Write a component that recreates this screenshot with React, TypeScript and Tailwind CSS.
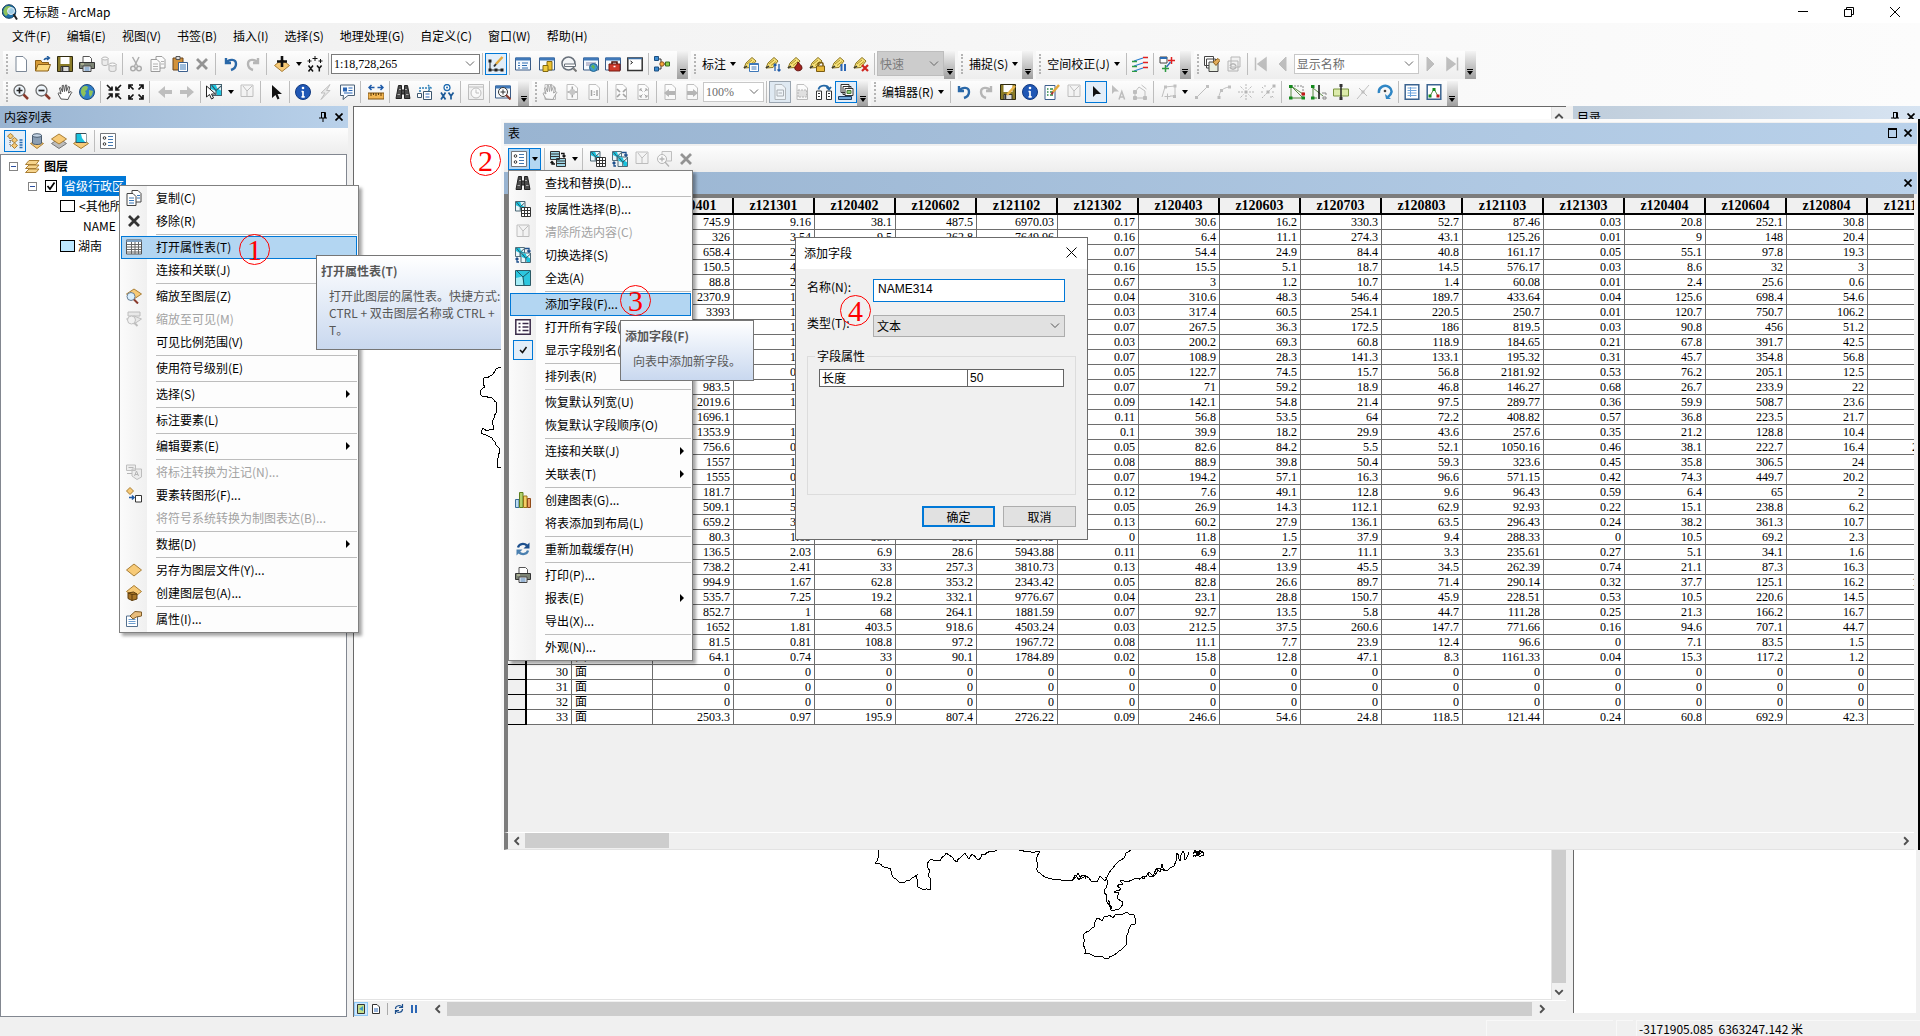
import React, { ReactNode } from "react";

const UI = "font-['Noto_Sans_CJK_SC','Noto_Sans',sans-serif]";
const SONG = "font-['Liberation_Serif','Noto_Sans_CJK_SC',serif]";

/* ---------- icons, each drawn on a 16 x 16 grid ---------- */

const map = (x: number, y: number, s: number) => (
  <g transform={`translate(${x} ${y}) scale(${s})`}>
    <path d="M0 0h10v10H0z" fill="#e8f6fa" stroke="#44606e" />
    <path d="M.5.5H5l1 3 3.500 2v4H6L5 6 .5 4z" fill="#19c3de" />
    <path d="M1 .5l4 5 4.500-4M5 5.500V9.500" fill="none" stroke="#36505c" />
  </g>
);
const tag = (
  <>
    <path d="M1 12l2-5 6-5.500 4 3.500-5 6.500z" fill="#f7e27a" stroke="#8a7420" />
    <path d="M4 8l5-4M6 9.500l5-4" stroke="#b09328" />
    <path d="M1 12l3-2" stroke="#333" strokeWidth="1.500" />
  </>
);
const layer = (y: number, fill = "#f7ca77", stroke = "#a97e35") => (
  <path d={`M.5 ${y}L8 ${y - 6}l7.500 6L8 ${y + 6}z`} fill={fill} stroke={stroke} />
);
const flatLayer = (y: number, fill = "#f7ca77", stroke = "#a97e35") => (
  <path d={`M.5 ${y}L8 ${y - 5}l7.500 5L8 ${y + 5}z`} fill={fill} stroke={stroke} />
);
const win = (
  <>
    <path d="M.5 2h15v12H.5z" fill="#f5f9fd" stroke="#3b5b85" />
    <path d="M.5 1.500h15v3H.5z" fill="#3f78b8" />
  </>
);
const magnifier = (sign: ReactNode) => (
  <>
    <circle cx="6.500" cy="6.500" r="5.500" fill="#eef5fb" stroke="#6d6d6d" strokeWidth="1.300" />
    <path d="M10.500 10.500l4.500 4.500" stroke="#8a3a2c" strokeWidth="2.500" />
    {sign}
  </>
);
const hand = (
  <path
    d="M4 15L1 9.500l1-.8L4 10 2.500 4l1.200-.3L5.500 8 5.200 1.500l1.300-.2L7.500 7.500 8.500 1l1.300.2-.3 6L11.500 2.500l1.200.5-1.200 6 2.500-1.500.8.8L12 13l-1 2.500z"
    fill="#fff"
    stroke="#555"
  />
);
const page = <path d="M3 .5h7l3.500 3.500v11.500H3z" fill="#fff" stroke="#7b8796" />;
const undoPath = "M3 2v5h5M3.500 6.500C6 3 13 2.500 13 8c0 3-2 5-5 6";
const redoPath = "M13 2v5H8M12.500 6.500C10 3 3 2.500 3 8c0 3 2 5 5 6";
const inArrows = "M4 5l3 3M13 5l-3 3M4 13l3-3M13 13l-3-3";
const binoculars = (
  <>
    <path d="M1 14.500l2.500-13H6.500v13zM9.500 14.500v-13h3l2.500 13zM6.500 6h3v4h-3z" fill="#4b4b4b" stroke="#222" />
    <path d="M2.500 10.500H5M11 10.500h2.500M4 5.500h2M10 5.500h2" stroke="#aaa" />
  </>
);
const listIcon = (
  <>
    <path d="M.5.5h15v15H.5z" fill="#fff" stroke="#74777c" />
    <path d="M8 3.500h5M8 6.500h5M8 9.500h5M8 12.500h5" stroke="#4478b0" />
    <circle cx="4.500" cy="5" r="1.300" fill="#fff" stroke="#333" />
    <circle cx="4.500" cy="11" r="1.300" fill="#fff" stroke="#333" />
  </>
);
const printer = (
  <>
    <path d="M4 .5h6.500l2 2V7H4z" fill="#fff" stroke="#555" />
    <path d="M.5 6.500h15v6H.5z" fill="#7c8374" stroke="#333" />
    <path d="M4 10h8v5.500H4z" fill="#eef3f8" stroke="#444" />
    <path d="M5.500 12h5M5.500 14h5" stroke="#4478b0" />
    <path d="M2 8h3" stroke="#d6d9b0" />
  </>
);
const grid = (
  <>
    <path d="M.5 1h15v14H.5z" fill="#fff" stroke="#555" />
    <path d="M.5 1h15v2H.5z" fill="#7c9ec0" />
    <path d="M1 5.500h14M1 8h14M1 10.500h14M1 13h14M5.500 3v12M9 3v12M12.500 3v12" stroke="#666" />
  </>
);
const floppy = (
  <>
    <path d="M.5.5h15v15H.5z" fill="#8a7b28" stroke="#2f2a10" />
    <path d="M3.500 1h9v7h-9z" fill="#fff" />
    <path d="M4 10.500h8v5H4z" fill="#ddd" stroke="#333" />
    <path d="M5.500 11v4" stroke="#333" strokeWidth="1.500" />
  </>
);
const docs = (
  <>
    <path d="M6 .5h6l3 3V12H6z" fill="#fff" stroke="#444" />
    <path d="M1 3.500h6l3 3v9H1z" fill="#fff" stroke="#444" />
    <path d="M3 8h5M3 10.500h5M3 13h5M11 5.500h3M11 8h3" stroke="#3a78b8" />
  </>
);
const smallGrid = (
  <>
    <path d="M6.500 6.500h9v9h-9z" fill="#fff" stroke="#333" />
    <path d="M6.500 9.500h9M6.500 12.500h9M9.500 6.500v9M12.500 6.500v9" stroke="#333" />
  </>
);

const icons: Record<string, ReactNode> = {
  new: page,
  open: (
    <>
      <path d="M.5 4.500H6l1 2h6.500v8H.5z" fill="#d79b36" stroke="#8a5f18" />
      <path d="M3 8.500h12.500l-2.500 6.500H.5z" fill="#fbd97f" stroke="#8a5f18" />
      <path d="M9 4c1-2 3-2 5-2M12 0l2.500 2L12 4" fill="none" stroke="#1e5a9c" strokeWidth="1.300" />
    </>
  ),
  save: floppy,
  print: printer,
  db: (
    <>
      <path d="M1 2v6c0 2 6 2 6 0V2M8 8v6c0 2 7 2 7 0V8" fill="#e3e3e3" stroke="#777" />
      <ellipse cx="4" cy="2.500" rx="3" ry="1.500" fill="#fff" stroke="#777" />
      <ellipse cx="11.500" cy="8.500" rx="3.500" ry="1.500" fill="#fff" stroke="#777" />
    </>
  ),
  cut: (
    <>
      <path d="M4.500 1l5 9M11 1L6.500 10" stroke="#666" strokeWidth="1.500" />
      <circle cx="5" cy="12.500" r="2.300" fill="none" stroke="#666" strokeWidth="1.500" />
      <circle cx="11" cy="12.500" r="2.300" fill="none" stroke="#666" strokeWidth="1.500" />
    </>
  ),
  copy: docs,
  paste: (
    <>
      <path d="M1 2h10v12H1z" fill="#d2923b" stroke="#6a451a" />
      <path d="M4 .5h4v3H4z" fill="#ddd" stroke="#555" />
      <path d="M6.500 6.500h9v9h-9z" fill="#fff" stroke="#3c5f8d" />
      <path d="M8 9h6M8 11h6M8 13h6" stroke="#3a78b8" />
    </>
  ),
  x: <path d="M3 3l10 10M13 3L3 13" stroke="#333" strokeWidth="2.800" />,
  undo: <path d={undoPath} fill="none" stroke="#2a68a8" strokeWidth="2.400" />,
  redo: <path d={redoPath} fill="none" stroke="#777" strokeWidth="2.400" />,
  add: (
    <>
      {layer(9.5)}
      <path d="M8 0v11M3 5.500h10" stroke="#111" strokeWidth="2.600" />
    </>
  ),
  xy: (
    <>
      <path d="M8 0v5M5.500 2.500h5M2.500 3v4M.5 5h4M13.500 3v4M11.500 5h4" stroke="#111" />
      <path d="M1.500 9.500l4.500 6M6 9.500l-4.500 6M10 9.500l2.300 2.800 2.300-2.800M12.300 12v3.500" fill="none" stroke="#111" strokeWidth="1.500" />
    </>
  ),
  editor: (
    <>
      <path d="M2 5v9h12" fill="none" stroke="#222" />
      <path d="M.5 3.500h3v3h-3zM.5 12.500h3v3h-3zM6.500 12.500h3v3h-3zM12.500 12.500h3v3h-3z" fill="#222" />
      <path d="M8 8l6.500-7" stroke="#e5a93b" strokeWidth="2.500" />
      <path d="M6 10.500L8 8" stroke="#333" strokeWidth="2" />
    </>
  ),
  toc: (
    <>
      {win}
      <path d="M3 7h2M3 9.500h2M3 12h2M7 7h6M7 9.500h5M7 12h6" stroke="#2f6db0" />
    </>
  ),
  catalog: (
    <>
      {win}
      <path d="M8 5.500h5V14H8z" fill="#edc22e" stroke="#846a10" />
      <path d="M4 9.500h5v6H4z" fill="#f0cb3c" stroke="#846a10" />
    </>
  ),
  search: (
    <>
      <circle cx="7.500" cy="7.500" r="6.500" fill="#f4f6f8" stroke="#68707a" strokeWidth="1.500" />
      <path d="M3.500 8h11v2.500h-11z" fill="#fff" stroke="#68707a" />
      <path d="M12.500 12.500l3 3" stroke="#777" strokeWidth="2" />
    </>
  ),
  globewin: (
    <>
      {win}
      <path d="M3 7h10M3 9h4" stroke="#88a" />
      <circle cx="10.500" cy="11.500" r="4" fill="#3f9ad0" stroke="#24628c" />
      <path d="M8 10.500l2-2 2 2-1 3z" fill="#62b353" />
    </>
  ),
  toolbox: (
    <>
      {win}
      <path d="M4 8h11v7H4z" fill="#cf3a2c" stroke="#741b12" />
      <path d="M7 8V6h5v2" fill="none" stroke="#4d1009" strokeWidth="1.500" />
      <path d="M8.500 10.500h2" stroke="#fff" strokeWidth="1.500" />
    </>
  ),
  python: (
    <>
      <path d="M.8 2h14.400v12.500H.8z" fill="#fff" stroke="#333" strokeWidth="1.500" />
      <path d="M1 2.500h14" stroke="#3b6ea5" strokeWidth="1.500" />
      <path d="M3.500 5l2 1.500-2 1.500" fill="none" stroke="#111" />
    </>
  ),
  model: (
    <>
      <path d="M3 3h4v10H3M7 8h5" fill="none" stroke="#333" />
      <path d="M.5.5h4v4h-4zM.5 11h4v4h-4z" fill="#3b8bd1" stroke="#1d4f80" />
      <circle cx="8" cy="8" r="2.200" fill="#f7a73b" stroke="#8a5420" />
      <path d="M11.500 6h4v4h-4z" fill="#8fcf4b" stroke="#3a6c22" />
    </>
  ),
  tagwin: (
    <>
      {tag}
      <path d="M6.500 7.500h9v8h-9z" fill="#fff" stroke="#3f78b8" />
      <path d="M6.500 8.500h9M8.500 11h5M8.500 13h5" stroke="#3f78b8" />
    </>
  ),
  tagsort: (
    <>
      {tag}
      <path d="M10 8v7M8.500 9.500L10 8l1.500 1.500M14 8v7M12.500 13.500L14 15l1.500-1.500" fill="none" stroke="#1e5aa8" strokeWidth="1.300" />
    </>
  ),
  tagred: (
    <>
      {tag}
      <path d="M11 6c1 2 4 3 4 6s-6 4-7 1 2-3 3-7z" fill="#a3231d" stroke="#64120e" />
    </>
  ),
  taglock: (
    <>
      {tag}
      <path d="M9 10V8c0-2 5-2 5 0v2" fill="none" stroke="#7a5b12" strokeWidth="1.500" />
      <path d="M7.500 10h8v5.500h-8z" fill="#e8b93a" stroke="#7a5b12" />
    </>
  ),
  tagpause: (
    <>
      {tag}
      <path d="M10.500 8v7M14 8v7" stroke="#2b66b5" strokeWidth="2" />
    </>
  ),
  tagx: (
    <>
      {tag}
      <path d="M9 9l6 6M15 9l-6 6" stroke="#cf2620" strokeWidth="2.200" />
    </>
  ),
  adjust: (
    <>
      <path d="M2 5l9-3M2 10l9-3M2 15l9-3" stroke="#2b7fd0" strokeWidth="1.300" />
      <path d="M11 1.500h5M11 6.500h5M11 11.500h5" stroke="#e02020" strokeWidth="1.500" />
      <path d="M0 5.500h5M0 10.500h5M0 15.500h5" stroke="#2d9a41" strokeWidth="1.500" />
    </>
  ),
  link: (
    <>
      <path d="M1 1h7v6H1z" fill="#fff" stroke="#444" />
      <path d="M1 2h7" stroke="#2b6cb5" strokeWidth="2" />
      <path d="M12.500 1v7M9 4.500h7" stroke="#e02020" strokeWidth="1.500" />
      <path d="M6.500 9v7M3 12.500h7" stroke="#2d9a41" strokeWidth="1.500" />
      <path d="M7.500 11l4-5" stroke="#2b6cb5" strokeWidth="1.300" />
    </>
  ),
  pages: (
    <>
      <path d="M.5.5h9v9h-9zM2.500 3h9v9h-9z" fill="#fff" stroke="#444" />
      <path d="M5 6h9v9.500H5z" fill="#e8eee0" stroke="#444" />
      <path d="M9 6l5-3.500 2 2-4 5z" fill="#e2ad5a" stroke="#8a5f18" />
    </>
  ),
  refreshpages: (
    <>
      <path d="M5 1h9v10H5zM2 5h10v10H2z" fill="#eee" stroke="#777" />
      <path d="M4 10c1-3 5-3 6 0M10 11c-1 3-5 3-6 0" fill="none" stroke="#777" strokeWidth="1.500" />
    </>
  ),
  first: <path d="M2.500 1.500v13M13 2L5 8l8 6z" fill="#888" stroke="#888" strokeWidth="1.500" />,
  prev: <path d="M11 1L4 8l7 7z" fill="#888" stroke="#888" />,
  next: <path d="M5 1l7 7-7 7z" fill="#888" stroke="#888" />,
  last: <path d="M13.500 1.500v13M3 2l8 6-8 6z" fill="#888" stroke="#888" strokeWidth="1.500" />,
  zoomin: magnifier(<path d="M6.500 3.500v6M3.500 6.500h6" stroke="#222" strokeWidth="1.700" />),
  zoomout: magnifier(<path d="M3.500 6.500h6" stroke="#222" strokeWidth="1.700" />),
  pan: hand,
  globe: (
    <>
      <circle cx="8" cy="8" r="7.500" fill="#2f7dc8" stroke="#1d4b7c" />
      <path d="M3 4c2-3 5-2 6-1L8 6 6 7l1 2-2 4C2 11 1 7 3 4zM10 6l4 1-1 4-2 2-1-3z" fill="#8fc25a" />
    </>
  ),
  fixin: (
    <path d="M1 1l4 4M15 1l-4 4M1 15l4-4M15 15l-4-4M6 2.500V6H2.500M10 2.500V6h3.500M6 13.500V10H2.500M10 13.500V10h3.500" fill="none" stroke="#111" strokeWidth="1.700" />
  ),
  fixout: (
    <path d="M1 1l4.500 4.500M15 1l-4.500 4.500M1 15l4.500-4.500M15 15l-4.500-4.500M1 5V1h4M15 5V1h-4M1 11v4h4M15 11v4h-4" fill="none" stroke="#111" strokeWidth="1.700" />
  ),
  back: <path d="M8 2v4h7v4H8v4L1 8z" fill="#888" />,
  fwd: <path d="M8 2v4H1v4h7v4l7-6z" fill="#888" />,
  select: (
    <>
      {map(4.5, 0.5, 1.1)}
      <path d="M.5 2v11l3-2.500 2 4.500 2-1-2-4h4z" fill="#fff" stroke="#222" />
    </>
  ),
  clear: (
    <>
      <path d="M2 1h12v11.500H2z" fill="#f2f2f2" stroke="#888" />
      <path d="M4 2l4 5 5-5M8 7v5" fill="none" stroke="#888" />
    </>
  ),
  pointer: <path d="M4 1v13l3.500-3 2 4.500 2-1-2-4.500H14z" fill="#111" />,
  info: (
    <>
      <circle cx="8" cy="8" r="7.500" fill="#1f57b5" stroke="#123a80" />
      <path d="M8 7v6M6.500 7.500H8M6.500 12.800h3.200" stroke="#fff" strokeWidth="1.700" />
      <circle cx="8" cy="4" r="1.300" fill="#fff" />
    </>
  ),
  bolt: <path d="M13 .5L4 9h4l-4 6.500 9-9H9.500z" fill="#ddd" stroke="#888" />,
  html: (
    <>
      <path d="M1.500 1h14v10.500H9l-5 4 .5-4h-3z" fill="#f6fafe" stroke="#4b6076" />
      <path d="M4 3.500h4v4H4z" fill="#2b66b5" />
      <path d="M9.500 4h4M9.500 6.500h4M5 9h8.500" stroke="#2b66b5" />
    </>
  ),
  measure: (
    <>
      <path d="M1 3.500h5.500M9.500 3.500H15M3.500 1l-2.500 2.500L3.500 6M12.500 1L15 3.500 12.500 6" fill="none" stroke="#1e5aa8" strokeWidth="1.500" />
      <path d="M0 9h16v6H0z" fill="#f3b652" stroke="#7e5212" />
      <path d="M3 9v3M5.500 9v2M8 9v3M10.500 9v2M13 9v3" stroke="#5d3b09" />
    </>
  ),
  find: binoculars,
  route: (
    <>
      <path d="M3 8V4h10M11 1l3 3-3 3" fill="none" stroke="#2b7fb8" strokeWidth="1.500" strokeDasharray="2 1" />
      <path d="M.5 9.500h4v4h-4zM6.500 7.500h8v8h-8z" fill="#fff" stroke="#3c566e" />
      <path d="M8.500 10h4M8.500 13h4" stroke="#2b66b5" />
    </>
  ),
  goxy: (
    <>
      <circle cx="8" cy="3.500" r="3" fill="#fff" stroke="#1e6ab0" strokeWidth="1.300" />
      <circle cx="8" cy="3.500" r="1" fill="#1e6ab0" />
      <path d="M2 8.500l4.500 7M6.500 8.500L2 15.500M9.500 8.500l2.500 3.500 2.500-3.500M12 12v3.500" fill="none" stroke="#1c5a98" strokeWidth="1.700" />
    </>
  ),
  time: (
    <>
      <path d="M.5.5h15v15H.5z" fill="#eee" stroke="#888" />
      <path d="M1 3h14" stroke="#888" />
      <circle cx="8" cy="9" r="5" fill="#fff" stroke="#888" />
      <path d="M8 5.500V9h3" fill="none" stroke="#888" />
    </>
  ),
  viewer: (
    <>
      {win}
      <circle cx="8" cy="8" r="4.500" fill="#fff" stroke="#333" />
      <path d="M8 5.500v5M5.500 8h5" stroke="#333" />
      <path d="M11 11l4.500 4.500" stroke="#8a3a2c" strokeWidth="2" />
    </>
  ),
  ppan: (
    <>
      {page}
      {hand}
    </>
  ),
  pfull: (
    <>
      {page}
      <path d="M8.300 2.500v11M3.500 8h9.500" stroke="#555" strokeWidth="1.500" />
      <circle cx="8.300" cy="8" r="3" fill="#999" />
    </>
  ),
  p11: (
    <>
      {page}
      <path d="M5.500 6v6M11 6v6M8.300 7.500v1M8.300 10v1" stroke="#555" strokeWidth="1.500" />
    </>
  ),
  pin: (
    <>
      {page}
      <path d={inArrows} stroke="#555" strokeWidth="1.700" />
    </>
  ),
  pout: (
    <>
      {page}
      <path d="M5 5l2.500 2.500M12 5L9.500 7.500M5 13l2.500-2.500M12 13l-2.500-2.500M5 7V5h2M12 7V5h-2M5 11v2h2M12 11v2h-2" fill="none" stroke="#555" />
    </>
  ),
  pback: (
    <>
      {page}
      <path d="M7 5v2h6v4H7v2L2 9z" fill="#777" />
    </>
  ),
  pfwd: (
    <>
      {page}
      <path d="M9 5v2H3v4h6v2l5-4z" fill="#777" />
    </>
  ),
  draft: (
    <>
      {page}
      <path d="M5 6h6.500v6H5zM6.500 9h3.500" fill="none" stroke="#777" />
    </>
  ),
  focus: (
    <>
      {page}
      <path d="M4 6h8.500v7H4z" fill="#ccc" stroke="#777" strokeDasharray="2 1" />
    </>
  ),
  layout: (
    <>
      <path d="M.5 7h5v8.500h-5zM10.500 7h5v8.500h-5z" fill="#fff" stroke="#333" />
      <path d="M2 9.500h2M2 12.500h2M12 9.500h2M12 12.500h2" stroke="#333" />
      <path d="M2.500 5.500c1-5 9-5 10.500-1M10.500 3l2.500 2.500L15 3" fill="none" stroke="#2166a5" strokeWidth="1.800" />
    </>
  ),
  driven: (
    <>
      <path d="M3 .5h8v8H3zM5 2.500h8v8H5z" fill="#fff" stroke="#333" />
      <path d="M7 4.500h8v7H7z" fill="#fff" stroke="#333" />
      <path d="M9 6.500h4v3H9z" fill="#8fcf7b" stroke="#4b7a3a" />
      <path d="M.5 12.500h13v3H.5z" fill="#6fa8dc" stroke="#1d3f66" />
    </>
  ),
  saveedit: (
    <>
      {floppy}
      <path d="M7 11l8-9" stroke="#eab549" strokeWidth="2.500" />
    </>
  ),
  attrs: (
    <>
      <path d="M1 1.500h10v14H1z" fill="#fff" stroke="#3c5f8d" />
      <path d="M3 5h1.500M3 8h1.500M3 11h1.500M6 5h3M6 8h3M6 11h3" stroke="#2e8b45" strokeWidth="1.500" />
      <path d="M9 8l6-7" stroke="#e5a93b" strokeWidth="2.500" />
      <path d="M7.500 10.500L9 8" stroke="#a33" strokeWidth="2" />
    </>
  ),
  edit: <path d="M5 2v11l3-3h5z" fill="#111" />,
  edita: (
    <>
      <path d="M2 1v9l2.500-2.500H9z" fill="#888" />
      <path d="M9 15.500l2.800-8 2.800 8M10 13h3.500" fill="none" stroke="#888" strokeWidth="1.500" />
    </>
  ),
  reshape: (
    <>
      <path d="M3 14V8l4-5 6 4v7z" fill="none" stroke="#888" />
      <path d="M1.500 6.500h3v3h-3zM1.500 12.500h3v3h-3zM11.500 12.500h3v3h-3zM9.500 1l5 4" fill="#888" stroke="#888" />
    </>
  ),
  vertex: (
    <>
      <path d="M1 13l3-10 10-1v10H9M6.500 9.500v6M3.500 12.500h6" fill="none" stroke="#888" />
      <path d="M3 1.500h3v3H3zM12.500.5h3v3h-3zM12 11h3v3h-3z" fill="#888" />
    </>
  ),
  line: (
    <>
      <path d="M3 13L13 3" stroke="#888" />
      <path d="M1 12h3v3H1zM12 1h3v3h-3z" fill="#888" />
    </>
  ),
  arc: (
    <>
      <path d="M3 14c0-7 4-10 10-11" fill="none" stroke="#888" />
      <path d="M1.500 12h3v3h-3zM4 5h3v3H4zM12 1.500h3v3h-3z" fill="#888" />
    </>
  ),
  mid: (
    <>
      <path d="M8 0v5M8 11v5M0 8h5M11 8h5M2.500 2.500l3 3M13.500 2.500l-3 3M2.500 13.500l3-3M13.500 13.500l-3-3" stroke="#777" strokeDasharray="2 1" />
      <path d="M6.500 6.500h3v3h-3z" fill="#777" />
    </>
  ),
  midline: (
    <>
      <path d="M2 14L14 2M5 1v3M11 12v3M1 8h3M12 8h3M2 3l2 2M12 12l2 2" stroke="#777" strokeDasharray="2 1" />
      <path d="M6.500 6.500h3v3h-3zM12.500.5h3v3h-3z" fill="#777" />
    </>
  ),
  split1: (
    <>
      <path d="M2 2v12h12zM2 2l12 8" fill="none" stroke="#5b8c45" />
      <path d="M2 2h12v12" fill="none" stroke="#888" strokeDasharray="2 1" />
      <path d="M0 1h3.500v3H0zM0 12.500h3.500v3H0zM12.500 12.500H16v3h-3.500z" fill="#158a1e" />
      <path d="M12.500 8.500H16v3h-3.500z" fill="#c01818" />
    </>
  ),
  split2: (
    <>
      <path d="M2 2v12h4M2 4l10 8" fill="none" stroke="#5b8c45" />
      <path d="M8 1v14" stroke="#111" strokeWidth="1.500" />
      <path d="M0 1h3.500v3H0zM0 12.500h3.500v3H0z" fill="#158a1e" />
      <path d="M11 9h4v2M12 13h3v2h-3z" fill="none" stroke="#888" />
    </>
  ),
  cutpoly: (
    <>
      <path d="M.5 5h15v7H.5z" fill="#dcebab" stroke="#7a9440" />
      <path d="M8 1v14" stroke="#222" strokeWidth="1.500" />
      <path d="M6.500 0h3v3h-3zM6.500 13h3v3h-3z" fill="#333" />
    </>
  ),
  splitline: (
    <>
      <path d="M2 15L14 1M4 4l8 8" stroke="#888" />
      <path d="M6.500 6.500h3v3h-3z" fill="#888" />
    </>
  ),
  rotate: (
    <>
      <path d="M2 9C1 3 8 0 12 3s3 7-1 10" fill="none" stroke="#2f86c5" strokeWidth="2.500" />
      <path d="M8 10l1 5h5z" fill="#2f86c5" />
      <circle cx="8" cy="7" r="1.300" fill="#444" />
    </>
  ),
  rows: (
    <>
      <path d="M1.200.8h13.600v14.400H1.200z" fill="#fff" stroke="#3a6390" strokeWidth="1.500" />
      <path d="M3.500 4h9M3.500 6.500h9M3.500 9h9M3.500 11.500h9M6.500 3v10" stroke="#6ea4dc" />
    </>
  ),
  sketch: (
    <>
      <path d="M1.200.8h13.600v14.400H1.200z" fill="#fff" stroke="#3a6390" strokeWidth="1.500" />
      <path d="M4 12l4-7 4 7" fill="none" stroke="#5b8c45" />
      <path d="M2.500 10.500h3v3h-3zM6.500 4h3v3h-3z" fill="#158a1e" />
      <path d="M10.500 10.500h3v3h-3z" fill="#c01818" />
    </>
  ),
  order: (
    <>
      <path d="M3 5v8h5M3 8h5" fill="none" stroke="#555" strokeDasharray="1 1" />
      <path d="M.5 3l3-2.500L6.500 3l-3 3zM4.500 7l3-2.500 3 2.500-3 3zM4.500 12.500l3-2.500 3 2.500-3 3z" fill="#f7ca77" stroke="#a97e35" />
      <path d="M12.500 7h3M12.500 9.500h3M12.500 12h3M12.500 14.500h3" stroke="#2c6cb0" strokeWidth="1.500" />
    </>
  ),
  source: (
    <>
      <path d="M1.500 10.500l6.500-3 6.500 3-6.500 5z" fill="#f7ca77" stroke="#a97e35" />
      <path d="M3.500 2v8c0 2 9 2 9 0V2" fill="#8b9fb5" stroke="#4a5c70" />
      <ellipse cx="8" cy="2.500" rx="4.500" ry="1.800" fill="#c6d5e5" stroke="#4a5c70" />
    </>
  ),
  visible: (
    <>
      {flatLayer(10.5, "#bbb", "#777")}
      {flatLayer(6)}
    </>
  ),
  selection: (
    <>
      {flatLayer(10.5)}
      <path d="M3 .5h10v9H3z" fill="#19c3de" stroke="#36505c" />
      <path d="M8 1l1 4 3 4h1V1z" fill="#fff" />
    </>
  ),
  list: listIcon,
  layers: (
    <path d="M1.500 14.500H12l3-3.500H5zM1.500 10.500H12L15 7H5zM1.500 6.500H12l3-4H5z" fill="#f7d48c" stroke="#a97e35" />
  ),
  table: grid,
  zoomlayer: (
    <>
      {flatLayer(6)}
      <circle cx="5" cy="8.500" r="4" fill="#d9efff" stroke="#6a7f94" />
      <path d="M8 11.500l4 4" stroke="#8a3a2c" strokeWidth="2" />
    </>
  ),
  zoomvis: (
    <>
      <path d="M2 1h12v4H2zM.5 8L8 5l7.500 3L8 13z" fill="#ddd" stroke="#888" />
      <circle cx="5.500" cy="9" r="4" fill="#eee" stroke="#888" />
      <path d="M8.500 12l3 3" stroke="#888" strokeWidth="2" />
    </>
  ),
  anno: (
    <>
      <path d="M.5 1h9v5.500h-9zM6 5h9.500v8L11 15.500 6 12z" fill="#e6e6e6" stroke="#888" />
      <path d="M2.500 3.500h5M1 9.500h5M8.500 12l2-5 2 5M9 10.500h3" fill="none" stroke="#777" />
    </>
  ),
  tographic: (
    <>
      <path d="M.5 4l3.500-3.500L7.500 4 4 7.500z" fill="#f7ca77" stroke="#a97e35" />
      <path d="M3 10.500h5M6 8.500l2 2-2 2" fill="none" stroke="#1e5aa8" strokeWidth="1.500" />
      <path d="M9.500 8.500h6v6.500h-6z" fill="#fff" stroke="#333" />
    </>
  ),
  lyr: layer(8),
  package: (
    <>
      {layer(6.5)}
      <path d="M2 8l5.500-1 3.500 2v5l-5 1.500-4-2z" fill="#a87526" stroke="#5e3d0c" />
      <path d="M6 9.500V15.500M2 8l4 1.500L11 9" fill="none" stroke="#5e3d0c" />
    </>
  ),
  props: (
    <>
      <path d="M.5 5h11v10.500H.5z" fill="#fff" stroke="#54708e" />
      <path d="M2.500 8.500h7M2.500 10.500h7M2.500 12.500h7" stroke="#6d9ed0" />
      <path d="M4 5l5-4.500 6.500.5V5l-5 1-3.500 2z" fill="#e8bd7c" stroke="#7f5c28" />
    </>
  ),
  related: (
    <>
      <path d="M.5.5h9v8h-9zM6.500 7.500h9v8h-9z" fill="#9fd8e8" stroke="#333" />
      <path d="M.5 3h9M.5 5.500h9M6.500 10h9M6.500 12.500h9" stroke="#333" />
      <path d="M11 2.500h3v3M12.500 4.500L14 6l1.500-1.500M5 13H2v-2.500M.5 12L2 10.500 3.500 12" fill="none" stroke="#111" strokeWidth="1.300" />
    </>
  ),
  selattr: (
    <>
      {map(0.5, 0.5, 0.95)}
      {smallGrid}
    </>
  ),
  switch: (
    <>
      {map(0.5, 0.5, 0.9)}
      {map(6, 6, 0.95)}
      <path d="M10 1.500h4v3.500M12.300 3.500L14 5.300l1.500-1.800M4 15H2v-4M.5 12.500L2 11l1.500 1.500" fill="none" stroke="#1d4f8c" strokeWidth="1.300" />
    </>
  ),
  zoomsel: (
    <>
      <path d="M6 .5h9.500v9.500H6z" fill="#eee" stroke="#888" />
      <circle cx="6" cy="8" r="4.500" fill="#fff" stroke="#777" />
      <path d="M6 5.500v5M3.500 8h5M9 11l4 4.500" stroke="#777" strokeWidth="1.300" />
    </>
  ),
  selall: (
    <>
      <path d="M.5.5h15v15H.5z" fill="#2cc6de" stroke="#2c5a66" />
      <path d="M1 8l6.500-1.500L8.500 15H1z" fill="#a5ecf5" />
      <path d="M2 1l6 6 6.500-5.500M8 7l1 8" fill="none" stroke="#1b5966" />
    </>
  ),
  fields: (
    <>
      <path d="M.8.8h14.400v14.400H.8z" fill="#fff" stroke="#3b2b49" strokeWidth="1.500" />
      <path d="M3.500 4.500h2M3.500 8h2M3.500 11.500h2M7.500 4.500h6M7.500 8h6M7.500 11.500h6" stroke="#3b2b49" strokeWidth="1.500" />
    </>
  ),
  check: <path d="M5 8l2.500 2.500L11.500 5" fill="none" stroke="#111" strokeWidth="1.500" />,
  chart: (
    <>
      <path d="M.5 7.500h3.500v8H.5z" fill="#bcdcf2" stroke="#3b6e96" />
      <path d="M4.500.5H8v15H4.500z" fill="#b4d16c" stroke="#5c7e1d" />
      <path d="M8.500 4H12v11.500H8.500z" fill="#f5cf66" stroke="#96741a" />
      <path d="M12.500 6.500h3v9h-3z" fill="#e89c62" stroke="#914a17" />
    </>
  ),
  reload: (
    <>
      <path d="M3 6.500c1-4 6-4.500 9-2" fill="none" stroke="#1c4f8d" strokeWidth="2.300" />
      <path d="M14.500 1.500v6h-6z" fill="#1c4f8d" />
      <path d="M13 9.500c-1 4-6 4.500-9 2" fill="none" stroke="#4b80b0" strokeWidth="2.300" />
      <path d="M1.500 14.500v-6h6z" fill="#4b80b0" />
    </>
  ),
};

function Icon({ name, dim = false }: { name: string; dim?: boolean }) {
  return (
    <svg viewBox="0 0 16 16" className={dim ? "size-4 shrink-0 opacity-50 grayscale" : "size-4 shrink-0"} aria-hidden="true">
      {icons[name]}
    </svg>
  );
}

function Caret() {
  return <span className="size-0 border-x-[3px] border-t-[4px] border-x-transparent border-t-black" />;
}

/* "|" separator, "_" small gap, "v" drop arrow, "~" disabled, "#" pressed, "=" pressed and disabled */
function Tools({ items }: { items: string }) {
  return (
    <>
      {items.split(" ").map((t, i) => {
        if (t === "|") return <span key={i} className="mx-0.5 h-[22px] w-px shrink-0 bg-[#bdbdbd]" />;
        if (t === "_") return <span key={i} className="w-0.5 shrink-0" />;
        if (t === "v")
          return (
            <button key={i} aria-label="more" className="flex h-[22px] w-[11px] shrink-0 items-center justify-center">
              <Caret />
            </button>
          );
        const mark = t[0];
        const name = t.replace(/^[~#=]/, "");
        const box =
          mark === "#"
            ? "border border-[#0078d7] bg-[#e3eef9]"
            : mark === "="
              ? "border border-[#9aa5b0] bg-[#dfe9f2]"
              : "";
        return (
          <button key={i} aria-label={name} className={`flex size-[22px] shrink-0 items-center justify-center ${box}`}>
            <Icon name={name} dim={mark === "~" || mark === "="} />
          </button>
        );
      })}
    </>
  );
}

function Bar({ children }: { children: ReactNode }) {
  return (
    <div className="flex h-full shrink-0 items-stretch bg-gradient-to-b from-[#fdfdfd] to-[#ededed] pl-[3px]">
      <div className="flex items-center pb-[3px]">
        <span className="mr-0.5 h-5 w-0 border-l-2 border-dotted border-[#b4b4b4]" />
        {children}
      </div>
      <button
        aria-label="toolbar options"
        className="flex w-[11px] flex-col items-center justify-end gap-px bg-gradient-to-b from-[#f4f4f4] to-[#9f9f9f] pb-1"
      >
        <span className="h-px w-1.5 bg-black" />
        <Caret />
      </button>
    </div>
  );
}

function TextDrop({ label }: { label: string }) {
  return (
    <button className="flex h-[22px] items-center gap-1 px-1">
      {label}
      <Caret />
    </button>
  );
}

function Combo({ value, label, frame, text = "" }: { value: string; label: string; frame: string; text?: string }) {
  return (
    <span className={`relative flex items-center border ${frame}`}>
      <select aria-label={label} className={`h-full w-full appearance-none bg-transparent pl-0.5 text-xs outline-none ${text}`}>
        <option>{value}</option>
      </select>
      <svg viewBox="0 0 10 6" className="pointer-events-none absolute right-1 h-1.5 w-2.5" aria-hidden="true">
        <path d="M1 .5l4 4 4-4" fill="none" stroke="#666" />
      </svg>
    </span>
  );
}

function Cross() {
  return (
    <svg viewBox="0 0 8 8" className="size-2" aria-hidden="true">
      <path d="M.5.5l7 7M7.500.5l-7 7" stroke="#000" strokeWidth="1.700" />
    </svg>
  );
}
function PushPin() {
  return (
    <svg viewBox="0 0 8 10" className="h-2.5 w-2" aria-hidden="true">
      <path d="M2 .5h4.500V6M2.500 0v6M0 6h8M4 6v4M5.500.5V6" fill="none" stroke="#000" />
    </svg>
  );
}

/* ---------- menus ---------- */

type Item = { t: string; icon?: string; off?: boolean; sub?: boolean; hot?: boolean; on?: boolean } | null;

const layerMenu: Item[] = [
  { t: "复制(C)", icon: "copy" },
  { t: "移除(R)", icon: "x" },
  null,
  { t: "打开属性表(T)", icon: "table", hot: true },
  { t: "连接和关联(J)" },
  null,
  { t: "缩放至图层(Z)", icon: "zoomlayer" },
  { t: "缩放至可见(M)", icon: "zoomvis", off: true },
  { t: "可见比例范围(V)" },
  null,
  { t: "使用符号级别(E)" },
  null,
  { t: "选择(S)", sub: true },
  null,
  { t: "标注要素(L)" },
  null,
  { t: "编辑要素(E)", sub: true },
  null,
  { t: "将标注转换为注记(N)...", icon: "anno", off: true },
  { t: "要素转图形(F)...", icon: "tographic" },
  { t: "将符号系统转换为制图表达(B)...", off: true },
  null,
  { t: "数据(D)", sub: true },
  null,
  { t: "另存为图层文件(Y)...", icon: "lyr" },
  { t: "创建图层包(A)...", icon: "package" },
  null,
  { t: "属性(I)...", icon: "props" },
];

const tableMenu: Item[] = [
  { t: "查找和替换(D)...", icon: "find" },
  null,
  { t: "按属性选择(B)...", icon: "selattr" },
  { t: "清除所选内容(C)", icon: "clear", off: true },
  { t: "切换选择(S)", icon: "switch" },
  { t: "全选(A)", icon: "selall" },
  null,
  { t: "添加字段(F)...", hot: true },
  { t: "打开所有字段(N)", icon: "fields" },
  { t: "显示字段别名(I)", icon: "check", on: true },
  null,
  { t: "排列表(R)" },
  null,
  { t: "恢复默认列宽(U)" },
  { t: "恢复默认字段顺序(O)" },
  null,
  { t: "连接和关联(J)", sub: true },
  { t: "关联表(T)", sub: true },
  null,
  { t: "创建图表(G)...", icon: "chart" },
  { t: "将表添加到布局(L)" },
  null,
  { t: "重新加载缓存(H)", icon: "reload" },
  null,
  { t: "打印(P)...", icon: "print" },
  { t: "报表(E)", sub: true },
  { t: "导出(X)..." },
  null,
  { t: "外观(N)..." },
];

function Menu({ items, label, className }: { items: Item[]; label: string; className: string }) {
  return (
    <div
      role="menu"
      aria-label={label}
      className={`absolute border border-[#808080] bg-[#fdfdfd] bg-[linear-gradient(to_right,#fbfbfb,#f0f0f0_27px,#fdfdfd_27px)] p-px shadow-[3px_3px_3px_rgba(0,0,0,0.35)] ${className}`}
    >
      {items.map((it, i) =>
        it === null ? (
          <div key={i} role="separator" className="ml-[35px] flex h-[3px] items-center">
            <span className="h-px w-full bg-[#bdbdbd]" />
          </div>
        ) : (
          <button
            key={i}
            role="menuitem"
            className={`flex h-[23px] w-full items-center border pb-0.5 text-left whitespace-nowrap ${it.hot ? "border-[#0078d7] bg-[#b3d6f2]" : "border-transparent"} ${it.off ? "text-[#a3a3a3]" : "text-black"}`}
          >
            <span className="flex w-[34px] shrink-0 items-center pl-0.5">
              <span className={`flex size-5 items-center justify-center ${it.on ? "border border-[#0078d7] bg-[#e3eef9]" : ""}`}>
                {it.icon && <Icon name={it.icon} dim={it.off} />}
              </span>
            </span>
            {it.t}
            {it.sub && <span className="mr-1.5 ml-auto size-0 border-y-4 border-l-4 border-y-transparent border-l-black" />}
          </button>
        ),
      )}
    </div>
  );
}

function Tip({ title, className, children }: { title: string; className: string; children: ReactNode }) {
  return (
    <div
      role="tooltip"
      className={`absolute border border-[#767676] bg-gradient-to-b from-white to-[#c9d8ef] px-1 pt-1.5 leading-[17px] text-[#575757] ${className}`}
    >
      <div className="font-bold">{title}</div>
      <div className="mt-2 pl-2 whitespace-nowrap">{children}</div>
    </div>
  );
}

function Step({ n, className }: { n: string; className: string }) {
  return (
    <span
      className={`absolute flex size-[31px] items-center justify-center rounded-full border border-[#f00] font-['Liberation_Serif',serif] text-[30px] leading-none text-[#f00] ${className}`}
    >
      {n}
    </span>
  );
}

/* ---------- attribute table ---------- */

const columns = "z120401 z121301 z120402 z120602 z121102 z121302 z120403 z120603 z120703 z120803 z121103 z121303 z120404 z120604 z120804 z121104".split(" ");

const records = `745.9 9.16 38.1 487.5 6970.03 0.17 30.6 16.2 330.3 52.7 87.46 0.03 20.8 252.1 30.8
326 3.54 9.5 262.8 7649.96 0.16 6.4 11.1 274.3 43.1 125.26 0.01 9 148 20.4
658.4 2.12 - - - 0.07 54.4 24.9 84.4 40.8 161.17 0.05 55.1 97.8 19.3
150.5 4.31 - - - 0.16 15.5 5.1 18.7 14.5 576.17 0.03 8.6 32 3
88.8 2.45 - - - 0.67 3 1.2 10.7 1.4 60.08 0.01 2.4 25.6 0.6
2370.9 1.32 - - - 0.04 310.6 48.3 546.4 189.7 433.64 0.04 125.6 698.4 54.6
3393 1.28 - - - 0.03 317.4 60.5 254.1 220.5 250.7 0.01 120.7 750.7 106.2
- 1.54 - - - 0.07 267.5 36.3 172.5 186 819.5 0.03 90.8 456 51.2
- 1.36 - - - 0.03 200.2 69.3 60.8 118.9 184.65 0.21 67.8 391.7 42.5
- 1.47 - - - 0.07 108.9 28.3 141.3 133.1 195.32 0.31 45.7 354.8 56.8
- 0.92 - - - 0.05 122.7 74.5 15.7 56.8 2181.92 0.53 76.2 205.1 12.5
983.5 1.25 - - - 0.07 71 59.2 18.9 46.8 146.27 0.68 26.7 233.9 22
2019.6 1.43 - - - 0.09 142.1 54.8 21.4 97.5 289.77 0.36 59.9 508.7 23.6
1696.1 1.2 - - - 0.11 56.8 53.5 64 72.2 408.82 0.57 36.8 223.5 21.7
1353.9 1.64 - - - 0.1 39.9 18.2 29.9 43.6 257.6 0.35 21.2 128.8 10.4
756.6 0.85 - - - 0.05 82.6 84.2 5.5 52.1 1050.16 0.46 38.1 222.7 16.4 2104.3
1557 1.29 - - - 0.08 88.9 39.8 50.4 59.3 323.6 0.45 35.8 306.5 24
1555 0.94 - - - 0.07 194.2 57.1 16.3 96.6 571.15 0.42 74.3 449.7 20.2
181.7 1.73 - - - 0.12 7.6 49.1 12.8 9.6 96.43 0.59 6.4 65 2
509.1 5.26 - - - 0.05 26.9 14.3 112.1 62.9 92.93 0.22 15.1 238.8 6.2
659.2 3.18 - - - 0.13 60.2 27.9 136.1 63.5 296.43 0.24 38.2 361.3 10.7
80.3 1.63 33.7 38.8 1963.45 0 11.8 1.5 37.9 9.4 288.33 0 10.5 69.2 2.3
136.5 2.03 6.9 28.6 5943.88 0.11 6.9 2.7 11.1 3.3 235.61 0.27 5.1 34.1 1.6
738.2 2.41 33 257.3 3810.73 0.13 48.4 13.9 45.5 34.5 262.39 0.74 21.1 87.3 16.3
994.9 1.67 62.8 353.2 2343.42 0.05 82.8 26.6 89.7 71.4 290.14 0.32 37.7 125.1 16.2 1046.2
535.7 7.25 19.2 332.1 9776.67 0.04 23.1 28.8 150.7 45.9 228.51 0.53 10.5 220.6 14.5
852.7 1 68 264.1 1881.59 0.07 92.7 13.5 5.8 44.7 111.28 0.25 21.3 166.2 16.7
1652 1.81 403.5 918.6 4503.24 0.03 212.5 37.5 260.6 147.7 771.66 0.16 94.6 707.1 44.7
81.5 0.81 108.8 97.2 1967.72 0.08 11.1 7.7 23.9 12.4 96.6 0 7.1 83.5 1.5
64.1 0.74 33 90.1 1784.89 0.02 15.8 12.8 47.1 8.3 1161.33 0.04 15.3 117.2 1.2
0 0 0 0 0 0 0 0 0 0 0 0 0 0 0
0 0 0 0 0 0 0 0 0 0 0 0 0 0 0
0 0 0 0 0 0 0 0 0 0 0 0 0 0 0
2503.3 0.97 195.9 807.4 2726.22 0.09 246.6 54.6 24.8 118.5 121.44 0.24 60.8 692.9 42.3`
  .split("\n")
  .map((line) => line.split(" ").map((v) => (v === "-" ? "" : v)));

function AttributeTable() {
  const head = "h-[17px] overflow-hidden border-r-2 border-b-2 border-black bg-[#f0f0f0] p-0 text-center text-sm leading-[15px]";
  const cell = "h-[15px] border-r border-b border-[#6e6e6e] p-0 pr-[3px] text-right leading-[14px]";
  return (
    <table className={`w-[1441px] table-fixed border-separate border-spacing-0 bg-white text-xs ${SONG}`}>
      <colgroup>
        <col className="w-[19px]" />
        <col className="w-[45px]" />
        <col className="w-[81px]" />
        {columns.map((c) => (
          <col key={c} className="w-[81px]" />
        ))}
      </colgroup>
      <thead>
        <tr>
          <th className={head} />
          <th className={head}>FID</th>
          <th className={head}>Shape</th>
          {columns.map((c) => (
            <th key={c} className={head}>
              {c}
            </th>
          ))}
        </tr>
      </thead>
      <tbody>
        {records.map((r, i) => (
          <tr key={i}>
            <td className="h-[15px] border-r-2 border-b border-black bg-[#f0f0f0] p-0" />
            <td className={cell}>{i}</td>
            <td className="h-[15px] border-r border-b border-[#6e6e6e] p-0 pl-[3px] leading-[14px]">面</td>
            {columns.map((c, k) => (
              <td key={c} className={cell}>
                {r[k] ?? ""}
              </td>
            ))}
          </tr>
        ))}
      </tbody>
    </table>
  );
}

/* ---------- map outline ---------- */

function coast(points: string, rough = 2) {
  const p = points.split(" ").map((s) => s.split(",").map(Number));
  let seed = 7;
  const rnd = () => {
    seed = (seed * 1103515245 + 12345) % 2147483648;
    return seed / 2147483648 - 0.5;
  };
  let d = `M${p[0][0]} ${p[0][1]}`;
  for (let i = 1; i < p.length; i++) {
    const [ax, ay] = p[i - 1];
    const [bx, by] = p[i];
    const n = Math.max(1, Math.round(Math.hypot(bx - ax, by - ay) / 3));
    for (let k = 1; k <= n; k++) {
      const f = k / n;
      const j = k === n ? 0 : rough;
      d += `L${(ax + (bx - ax) * f + rnd() * j).toFixed(1)} ${(ay + (by - ay) * f + rnd() * j).toFixed(1)}`;
    }
  }
  return d;
}

const outlines = [
  coast("502,367 497,369 493,375 484,379 486,387 481,391 484,397 492,397 498,403 497,413 493,423 495,429 488,431 483,428 482,433 487,435 493,438 497,445 500,448 501,452 498,460 498,467 502,468"),
  coast("879,848 880,855 876,863 883,866 891,868 893,875 900,882 906,882 911,880 918,875 919,887 923,889 931,890 932,883 930,873 928,865 932,859 941,861 947,853 958,862 962,857 966,853 970,859 973,854 980,860 983,854 994,852 1000,849"),
  coast("1020,850 1032,852 1041,852 1037,860 1039,872 1046,877 1058,880 1072,881 1077,877 1079,873 1082,879 1087,876 1092,881 1098,882 1101,876 1106,881 1109,875 1112,870 1118,863 1125,858 1127,853 1134,849"),
  coast("1073,881 1076,875 1080,880 1083,875 1086,879", 3),
  coast("1106,877 1109,882 1105,890 1108,902 1112,910 1120,909 1124,902 1118,898 1120,893 1115,892 1122,889 1118,886 1124,884 1121,881 1127,882 1135,879 1147,877 1150,872 1154,876 1157,869 1161,872 1163,864 1166,871 1171,868 1175,866 1178,853 1181,861 1184,851 1186,860 1190,852"),
  coast("1109,900 1112,908 1110,903 1113,909", 3),
  coast("1140,880 1149,874 1155,876 1160,868 1165,870", 4),
  coast("1193,850 1204,852 1194,854 1202,850 1196,856 1205,853 1194,857", 5),
  coast("1098,918 1103,921 1105,917 1110,915 1114,918 1118,914 1124,914 1128,912 1135,915 1137,922 1131,927 1128,935 1127,945 1118,953 1113,956 1109,959 1104,957 1095,956 1086,953 1084,935 1090,931 1095,927 1098,918"),
];

/* ---------- page ---------- */

const chevron = {
  up: "M1 5l3-3 3 3",
  down: "M1 2.500l3 3 3-3",
  left: "M5.500 1l-3 3 3 3",
  right: "M2.500 1l3 3-3 3",
};
function ScrollArrow({ dir, className }: { dir: keyof typeof chevron; className: string }) {
  return (
    <button aria-label={`scroll ${dir}`} className={`flex shrink-0 items-center justify-center ${className}`}>
      <svg viewBox="0 0 8 8" className="size-2.5" aria-hidden="true">
        <path d={chevron[dir]} fill="none" stroke="#505050" strokeWidth="1.500" />
      </svg>
    </button>
  );
}

function Expander() {
  return (
    <button aria-label="collapse" className="flex size-[9px] shrink-0 items-center justify-center border border-[#848484] bg-white">
      <span className="h-px w-[5px] bg-[#2c4fa0]" />
    </button>
  );
}

function AddFieldDialog() {
  return (
    <div role="dialog" aria-label="添加字段" className="absolute top-[237px] left-[795px] flex h-[303px] w-[293px] flex-col border border-[#6b6b6b] bg-[#f0f0f0]">
      <div className="flex h-[31px] items-center justify-between bg-white pr-2.5 pb-0.5 pl-2">
        <span>添加字段</span>
        <button aria-label="close">
          <svg viewBox="0 0 11 11" className="size-[11px]" aria-hidden="true">
            <path d="M.5.5l10 10M10.500.5l-10 10" stroke="#000" />
          </svg>
        </button>
      </div>
      <div className="grid grid-cols-[66px_192px] items-start gap-y-[13px] pt-2.5 pl-[11px]">
        <label htmlFor="field-name" className="leading-4">
          名称(N):
        </label>
        <input
          id="field-name"
          defaultValue="NAME314"
          className="h-[23px] border border-[#0078d7] bg-white px-1 pb-1 font-['Liberation_Sans','Noto_Sans_CJK_SC',sans-serif] text-xs outline-none"
        />
        <label htmlFor="field-type" className="leading-4">
          类型(T):
        </label>
        <span className="relative flex h-[22px] items-center border border-[#adadad] bg-[#e1e1e1]">
          <select id="field-type" className="h-full w-full appearance-none bg-transparent pl-[3px] outline-none">
            <option>文本</option>
          </select>
          <svg viewBox="0 0 10 6" className="pointer-events-none absolute right-1 h-1.5 w-2.5" aria-hidden="true">
            <path d="M1 .5l4 4 4-4" fill="none" stroke="#555" />
          </svg>
        </span>
      </div>
      <fieldset className="mx-[11px] mt-2.5 h-[148px] border border-[#dcdcdc] px-[11px] pb-1">
        <legend className="-ml-1 px-0.5 leading-[18px]">字段属性</legend>
        <div className="mt-1 grid h-[18px] grid-cols-[148px_1fr] items-center border border-[#646464] bg-white leading-4">
          <label htmlFor="field-length" className="h-full border-r border-[#646464] pl-0.5">
            长度
          </label>
          <input id="field-length" defaultValue="50" className="h-full w-full min-w-0 pl-0.5 font-['Liberation_Sans',sans-serif] text-xs outline-none" />
        </div>
      </fieldset>
      <div className="mt-[11px] flex justify-end gap-2 pr-[11px]">
        <button className="h-[21px] w-[73px] border-2 border-[#0078d7] bg-[#e1e1e1] leading-4">确定</button>
        <button className="h-[21px] w-[73px] border border-[#adadad] bg-[#e1e1e1] leading-4">取消</button>
      </div>
    </div>
  );
}

export default function App() {
  return (
    <div className={`relative flex h-screen flex-col overflow-hidden bg-[#f0f0f0] text-xs text-black ${UI}`}>
      <header className="flex h-[23px] shrink-0 items-center bg-white pl-0.5">
        <svg viewBox="0 0 16 16" className="size-4" aria-hidden="true">
          <circle cx="7" cy="7.500" r="6.800" fill="#1d6fa8" stroke="#123c5c" />
          <path d="M2 5c2-4 6-3 7-2L8 6 5 7l1 3-2 2C1 10 1 7 2 5z" fill="#8fc25a" />
          <circle cx="9" cy="7" r="3.500" fill="#bfe4f5" fillOpacity=".8" stroke="#e8eef2" />
          <path d="M11.500 10l3.500 5.500" stroke="#222" strokeWidth="2" />
        </svg>
        <h1 className="ml-[5px]">无标题 - ArcMap</h1>
        <div className="ml-auto flex gap-9 pr-5">
          <button aria-label="minimize" className="flex size-2.5 items-center">
            <span className="h-px w-full bg-black" />
          </button>
          <button aria-label="restore">
            <svg viewBox="0 0 10 10" className="size-2.5" aria-hidden="true">
              <path d="M.5 2.500h7v7h-7zM2.500 2.500v-2h7v7h-2" fill="none" stroke="#000" />
            </svg>
          </button>
          <button aria-label="close">
            <svg viewBox="0 0 10 10" className="size-2.5" aria-hidden="true">
              <path d="M0 0l10 10M10 0L0 10" stroke="#000" />
            </svg>
          </button>
        </div>
      </header>

      <div className="shrink-0 bg-gradient-to-r from-[#f0f0f0] to-[#fcfcfc]">
        <nav className="flex h-7 items-center gap-4 pb-0.5 pl-3">
          {["文件(F)", "编辑(E)", "视图(V)", "书签(B)", "插入(I)", "选择(S)", "地理处理(G)", "自定义(C)", "窗口(W)", "帮助(H)"].map((m) => (
            <button key={m}>{m}</button>
          ))}
        </nav>

        <div className="flex h-7 items-stretch gap-[3px] pl-[3px]">
          <Bar>
            <Tools items="new open save print ~db | ~cut ~copy paste ~x | _ undo ~redo | _ add v xy |" />
            <Combo value="1:18,728,265" label="比例" frame="h-5 w-[149px] border-[#7a7a7a] bg-white" text={SONG} />
            <Tools items="| #editor | toc _ catalog search globewin toolbox python | model _" />
            <span className="w-0.5" />
          </Bar>
          <Bar>
            <TextDrop label="标注" />
            <Tools items="tagwin tagsort tagred taglock tagpause tagx |" />
            <Combo value="快速" label="放置" frame="h-[25px] w-[67px] border-[#bdbdbd] bg-[#cccccc]" text="text-[#7b7b7b]" />
          </Bar>
          <Bar>
            <TextDrop label="捕捉(S)" />
          </Bar>
          <Bar>
            <TextDrop label="空间校正(J)" />
            <Tools items="| adjust | link" />
            <span className="w-0.5" />
          </Bar>
          <Bar>
            <Tools items="pages ~refreshpages | ~first ~prev" />
            <Combo value="显示名称" label="显示名称" frame="h-5 w-[125px] border-[#c8c8c8] bg-white" text="text-[#6d6d6d]" />
            <Tools items="~next ~last" />
            <span className="w-0.5" />
          </Bar>
        </div>

        <div className="mt-0.5 flex h-[25px] items-stretch gap-[3px] pl-[3px]">
          <Bar>
            <Tools items="zoomin zoomout pan globe | fixin fixout | _ ~back ~fwd | select v ~clear | _ pointer | info ~bolt html | _ measure | find route goxy | _ ~time | viewer" />
            <span className="w-1" />
          </Bar>
          <Bar>
            <Tools items="~ppan ~pfull ~p11 | ~pin ~pout | ~pback ~pfwd" />
            <Combo value="100%" label="缩放" frame="h-5 w-[61px] border-[#c8c8c8] bg-white" text={`text-[#6d6d6d] ${SONG}`} />
            <Tools items="| =draft ~focus layout #driven" />
          </Bar>
          <Bar>
            <TextDrop label="编辑器(R)" />
            <Tools items="| undo ~redo saveedit info attrs ~clear #edit ~edita ~reshape | _ ~vertex v ~line ~arc ~mid ~midline | _ split1 split2 cutpoly ~splitline rotate | rows sketch" />
            <span className="w-0.5" />
          </Bar>
        </div>
      </div>

      <main className="flex min-h-0 flex-1">
        <aside className="flex w-[348px] shrink-0 flex-col">
          <div className="flex h-[22px] items-center bg-gradient-to-r from-[#99b4d1] to-[#b9d1ea] pr-[5px] pl-1">
            <h2>内容列表</h2>
            <button aria-label="pin" className="mr-2 ml-auto">
              <PushPin />
            </button>
            <button aria-label="close">
              <Cross />
            </button>
          </div>
          <div className="flex h-[26px] items-center bg-gradient-to-b from-[#fdfdfd] to-[#ededed] pl-1">
            <Tools items="#order source visible selection | list" />
          </div>
          <div className="mr-px flex-1 border border-[#828790] bg-white pt-px pl-2">
            <div className="flex h-5 items-center">
              <Expander />
              <span className="mr-1 ml-1.5 flex">
                <Icon name="layers" />
              </span>
              <b>图层</b>
            </div>
            <div className="flex h-5 items-center pl-[19px]">
              <Expander />
              <label className="ml-2 flex h-5 items-center">
                <input type="checkbox" defaultChecked className="peer sr-only" />
                <span className="mr-[5px] flex size-3 items-center justify-center border border-black">
                  <svg viewBox="0 0 10 10" className="size-2.5" aria-hidden="true">
                    <path d="M1.500 5l2.500 3 4.500-6.500" fill="none" stroke="#000" strokeWidth="1.700" />
                  </svg>
                </span>
                <span className="flex h-5 items-center bg-[#0078d7] px-0.5 text-white">省级行政区</span>
              </label>
            </div>
            <div className="flex h-5 items-center gap-1 pl-[51px]">
              <span className="h-3 w-[15px] border border-black bg-white" />
              &lt;其他所有值&gt;
            </div>
            <div className="flex h-5 items-center pl-[74px]">NAME</div>
            <div className="flex h-5 items-center gap-[3px] pl-[51px]">
              <span className="h-3 w-[15px] border border-black bg-[#bee8ff]" />
              湖南
            </div>
          </div>
        </aside>

        <section aria-label="地图" className="ml-[5px] flex min-w-0 flex-1 flex-col border-t border-l border-[#696969] bg-[#f0f0f0]">
          <div className="flex min-h-0 flex-1">
            <div className="relative flex-1 overflow-hidden border-r border-b border-[#e3e3e3] bg-white">
              <svg className="absolute inset-0 size-full" aria-hidden="true">
                <g transform="translate(-355 -107)" fill="none" stroke="#000" shapeRendering="crispEdges">
                  {outlines.map((d, i) => (
                    <path key={i} d={d} />
                  ))}
                </g>
              </svg>
            </div>
            <div className="flex w-[14px] flex-col">
              <ScrollArrow dir="up" className="h-5 w-full" />
              <div className="flex-1 bg-[#cdcdcd]" />
              <ScrollArrow dir="down" className="h-[17px] w-full" />
            </div>
          </div>
          <div className="flex h-[17px] shrink-0 items-center border-t border-white pr-[14px] pb-px">
            <button aria-label="data view" className="flex size-3.5 items-center justify-center border border-[#90c8f6] bg-[#cce8ff]">
              <svg viewBox="0 0 8 10" className="h-2.5 w-2">
                <path d="M.5.5h7v9h-7z" fill="#c5df8d" stroke="#333" />
                <path d="M2 5l4-3v5z" fill="#3b9ac4" />
              </svg>
            </button>
            <button aria-label="layout view" className="flex w-4 justify-center">
              <svg viewBox="0 0 8 10" className="h-2.5 w-2">
                <path d="M.5.5H5l2.500 2.500v6.500h-7z" fill="#fff" stroke="#333" />
                <path d="M2 5h4M2 7h4" stroke="#2b66b5" />
              </svg>
            </button>
            <span className="mx-[3px] h-3 w-px bg-[#aaa]" />
            <button aria-label="refresh" className="flex w-4 justify-center">
              <svg viewBox="0 0 10 10" className="size-2.5">
                <path d="M1.500 5c0-4 5-4 6.500-2M8.500 0v3.500H5M8.500 5c0 4-5 4-6.500 2M1.500 10V6.500H5" fill="none" stroke="#1c4f8d" strokeWidth="1.200" />
              </svg>
            </button>
            <button aria-label="pause" className="mr-2 flex w-3.5 justify-center gap-0.5">
              <span className="h-2 w-0.5 bg-[#2b66b5]" />
              <span className="h-2 w-0.5 bg-[#2b66b5]" />
            </button>
            <ScrollArrow dir="left" className="h-full w-[18px]" />
            <div className="h-[14px] flex-1 bg-[#cdcdcd]" />
            <ScrollArrow dir="right" className="h-full w-5" />
          </div>
        </section>

        <aside className="ml-[7px] flex w-[347px] shrink-0 flex-col pb-1">
          <div className="flex h-[22px] items-center bg-gradient-to-r from-[#bfcddb] to-[#d7e4f2] pr-[5px] pl-1">
            <h2>目录</h2>
            <button aria-label="pin" className="mr-2 ml-auto">
              <PushPin />
            </button>
            <button aria-label="close">
              <Cross />
            </button>
          </div>
          <div className="mr-1 flex-1 border-t border-l border-[#696969] bg-white" />
        </aside>
      </main>

      <footer className="mt-px flex h-[18px] shrink-0 items-end justify-end gap-[3px] overflow-hidden">
        <span className="h-4 w-[127px] border-t border-l border-[#f8f8f8]" />
        <span className="h-4 w-[17px] border-t border-l border-[#f8f8f8]" />
        <span className="h-4 w-[284px] border-t border-l border-[#f8f8f8] pl-0.5 leading-4 whitespace-pre">-3171905.085{"  "}6363247.142 米</span>
      </footer>

      <Menu items={layerMenu} label="图层" className="top-[185px] left-[119px] w-[240px]" />
      <Tip title="打开属性表(T)" className="top-[255px] left-[316px] h-[95px] w-[190px]">
        打开此图层的属性表。快捷方式:
        <br />
        CTRL + 双击图层名称或 CTRL +
        <br />
        T。
      </Tip>
      <Step n="1" className="top-[234px] left-[239px]" />
      <Step n="2" className="top-[145px] left-[470px]" />

      <section aria-label="表" className="absolute top-[119px] right-0 bottom-[186px] left-[501px] flex flex-col border-r-2 border-black bg-[#f0f0f0] pt-[3px] pr-px pl-[3px] shadow-[inset_3px_3px_0_#fafafa]">
        <div className="mt-px flex h-[21px] shrink-0 items-center bg-gradient-to-r from-[#99b4d1] to-[#b9d1ea] pr-[5px] pb-px pl-1">
          <h2>表</h2>
          <button aria-label="maximize" className="mr-[7px] ml-auto h-2.5 w-[9px] border border-t-2 border-black" />
          <button aria-label="close">
            <Cross />
          </button>
        </div>
        <div className="mt-0.5 flex h-[26px] shrink-0 items-center bg-gradient-to-b from-[#fdfdfd] to-[#ededed] pl-1">
          <div className="mr-px flex h-[22px] w-[33px] shrink-0 items-center border border-[#0078d7] bg-[#b3d6f2]">
            <button aria-label="表选项" className="flex h-full w-[21px] items-center justify-center border-r border-[#0078d7]">
              <Icon name="list" />
            </button>
            <button aria-label="more" className="flex flex-1 justify-center">
              <Caret />
            </button>
          </div>
          <Tools items="| related v | _ selattr switch ~clear ~zoomsel ~x" />
        </div>
        <div className="flex h-[22px] shrink-0 items-center justify-end bg-gradient-to-r from-[#99b4d1] to-[#b9d1ea] pr-[5px]">
          <button aria-label="close table">
            <Cross />
          </button>
        </div>
        <div className="mr-[3px] min-h-0 flex-1 overflow-hidden border-t-4 border-l-4 border-[#7c7c7c] bg-[#f0f0f0]">
          <AttributeTable />
        </div>
        <div className="mr-[3px] flex h-[18px] shrink-0 items-center border-t border-b border-l-4 border-white border-l-[#7c7c7c] border-b-[#e3e3e3] pb-px">
          <ScrollArrow dir="left" className="h-full w-[17px]" />
          <div className="h-[15px] w-[144px] bg-[#cdcdcd]" />
          <ScrollArrow dir="right" className="ml-auto h-full w-[17px]" />
        </div>
      </section>

      <Menu items={tableMenu} label="表选项" className="top-[170px] left-[508px] w-[185px]" />
      <Step n="3" className="top-[285px] left-[620px]" />
      <Tip title="添加字段(F)" className="top-[320px] left-[620px] h-[61px] w-[134px]">
        向表中添加新字段。
      </Tip>
      <AddFieldDialog />
      <Step n="4" className="top-[295px] left-[840px]" />
    </div>
  );
}
